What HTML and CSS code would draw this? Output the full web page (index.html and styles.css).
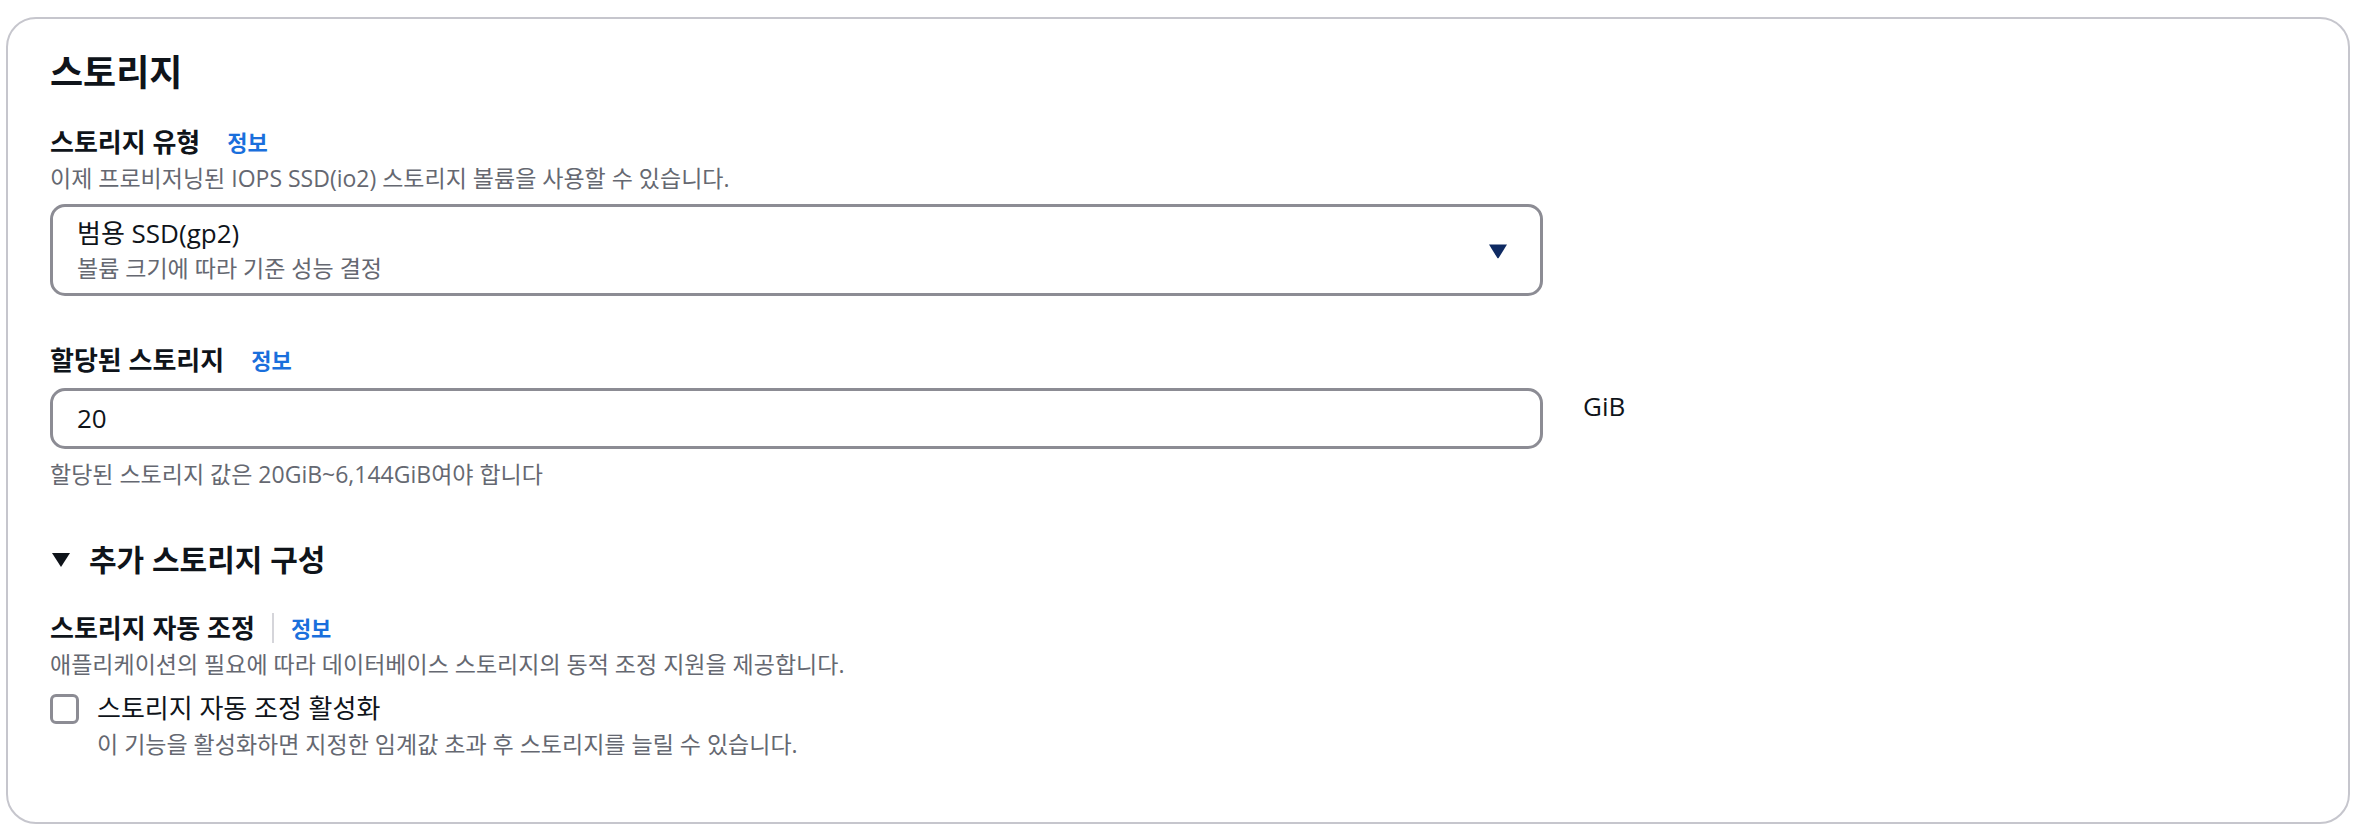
FILE: index.html
```html
<!DOCTYPE html>
<html lang="ko">
<head>
<meta charset="utf-8">
<title>스토리지</title>
<link rel="stylesheet" href="styles.css">
</head>
<body>
<div class="card">
  <h2 class="title">스토리지</h2>

  <div class="field">
    <div class="label-row"><span class="label">스토리지 유형</span><a class="info">정보</a></div>
    <div class="desc">이제 프로비저닝된 IOPS SSD(io2) 스토리지 볼륨을 사용할 수 있습니다.</div>
    <div class="select">
      <div class="select-text">
        <div class="select-main">범용 SSD(gp2)</div>
        <div class="select-sub">볼륨 크기에 따라 기준 성능 결정</div>
      </div>
      <svg class="caret" width="20" height="16" viewBox="0 0 20 16"><path d="M1 1.5 H19 L10.8 14.8 Q10 15.8 9.2 14.8 Z" fill="#0e2a62"/></svg>
    </div>
  </div>

  <div class="field field-alloc">
    <div class="label-row"><span class="label">할당된 스토리지</span><a class="info">정보</a></div>
    <div class="input-row">
      <div class="input">20</div>
      <span class="unit">GiB</span>
    </div>
    <div class="hint">할당된 스토리지 값은 20GiB~6,144GiB여야 합니다</div>
  </div>

  <div class="expander">
    <svg class="exp-caret" width="20" height="16" viewBox="0 0 20 16"><path d="M1 1 H19 L10 15 Z" fill="#0f141a"/></svg>
    <span>추가 스토리지 구성</span>
  </div>

  <div class="field field-auto">
    <div class="label-row"><span class="label">스토리지 자동 조정</span><span class="divider"></span><a class="info info-div">정보</a></div>
    <div class="desc">애플리케이션의 필요에 따라 데이터베이스 스토리지의 동적 조정 지원을 제공합니다.</div>
    <div class="check-row">
      <span class="checkbox"></span>
      <div class="check-text">
        <div class="check-label">스토리지 자동 조정 활성화</div>
        <div class="check-desc">이 기능을 활성화하면 지정한 임계값 초과 후 스토리지를 늘릴 수 있습니다.</div>
      </div>
    </div>
  </div>
</div>
</body>
</html>
```

FILE: styles.css
```css
html, body {
  margin: 0;
  padding: 0;
  background: #ffffff;
}

body {
  font-family: "Open Sans", "Noto Sans CJK KR", sans-serif;
  color: #0f141a;
}

.card {
  box-sizing: border-box;
  margin: 17px 0 0 6px;
  width: 2344px;
  height: 807px;
  border: 2px solid #c6c6cd;
  border-radius: 30px;
  padding: 33px 42px 0 42px;
}

.title {
  margin: 0 0 31px 0;
  font-size: 36px;
  line-height: 42px;
  font-weight: 700;
}

.label-row {
  display: flex;
  align-items: center;
  height: 34px;
}

.label {
  font-size: 26px;
  line-height: 34px;
  font-weight: 700;
}

.info {
  margin-left: 27px;
  font-size: 22px;
  line-height: 34px;
  font-weight: 700;
  color: #1a6fdc;
}

.divider {
  width: 2px;
  height: 30px;
  margin-left: 17px;
  background: #d5d5da;
}

.info-div {
  margin-left: 17px;
}

.desc {
  margin-top: 3px;
  font-size: 23px;
  line-height: 32px;
  color: #656871;
}

.select {
  box-sizing: border-box;
  margin-top: 10px;
  width: 1493px;
  height: 92px;
  border: 3px solid #8c8c94;
  border-radius: 15px;
  padding: 0 32px 0 24px;
  display: flex;
  align-items: center;
  justify-content: space-between;
}

.select-main {
  font-size: 26px;
  line-height: 33px;
}

.select-sub {
  margin-top: 2px;
  font-size: 23px;
  line-height: 32px;
  color: #656871;
}

.caret {
  display: block;
  margin-top: 1px;
}

.field-alloc {
  margin-top: 47px;
}

.input-row {
  margin-top: 11px;
  display: flex;
  align-items: flex-start;
}

.input {
  box-sizing: border-box;
  width: 1493px;
  height: 61px;
  border: 3px solid #8c8c94;
  border-radius: 15px;
  padding: 0 24px;
  font-size: 26px;
  line-height: 55px;
}

.unit {
  margin-left: 40px;
  padding-top: 1px;
  font-size: 26px;
  line-height: 34px;
}

.hint {
  margin-top: 9px;
  font-size: 23px;
  line-height: 32px;
  color: #656871;
}

.expander {
  margin-top: 50px;
  display: flex;
  align-items: center;
  gap: 18px;
  font-size: 30px;
  line-height: 40px;
  font-weight: 700;
  padding-left: 1px;
}

.exp-caret {
  display: block;
}

.field-auto {
  margin-top: 31px;
}

.check-row {
  margin-top: 11px;
  display: flex;
  align-items: flex-start;
  gap: 18px;
}

.checkbox {
  box-sizing: border-box;
  flex: none;
  width: 29px;
  height: 30px;
  margin-top: 3px;
  border: 3px solid #8c8c94;
  border-radius: 6px;
  background: #ffffff;
}

.check-label {
  font-size: 26px;
  line-height: 34px;
}

.check-desc {
  margin-top: 4px;
  font-size: 23px;
  line-height: 30px;
  color: #656871;
}
```
